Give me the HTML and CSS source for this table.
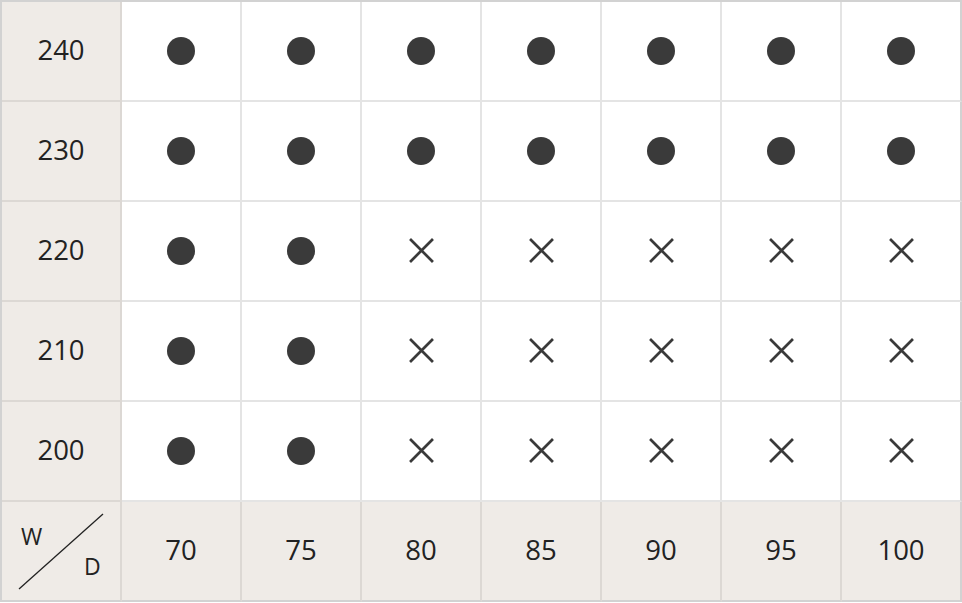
FILE: index.html
```html
<!DOCTYPE html>
<html>
<head>
<meta charset="utf-8">
<link rel="stylesheet" href="styles.css">
</head>
<body>
<div class="grid">
  <div class="cell head">240</div>
  <div class="cell"><span class="dot"></span></div>
  <div class="cell"><span class="dot"></span></div>
  <div class="cell"><span class="dot"></span></div>
  <div class="cell"><span class="dot"></span></div>
  <div class="cell"><span class="dot"></span></div>
  <div class="cell"><span class="dot"></span></div>
  <div class="cell"><span class="dot"></span></div>

  <div class="cell head">230</div>
  <div class="cell"><span class="dot"></span></div>
  <div class="cell"><span class="dot"></span></div>
  <div class="cell"><span class="dot"></span></div>
  <div class="cell"><span class="dot"></span></div>
  <div class="cell"><span class="dot"></span></div>
  <div class="cell"><span class="dot"></span></div>
  <div class="cell"><span class="dot"></span></div>

  <div class="cell head">220</div>
  <div class="cell"><span class="dot"></span></div>
  <div class="cell"><span class="dot"></span></div>
  <div class="cell"><svg class="cross" viewBox="0 0 24 24"><path d="M1 1L23 23M23 1L1 23"/></svg></div>
  <div class="cell"><svg class="cross" viewBox="0 0 24 24"><path d="M1 1L23 23M23 1L1 23"/></svg></div>
  <div class="cell"><svg class="cross" viewBox="0 0 24 24"><path d="M1 1L23 23M23 1L1 23"/></svg></div>
  <div class="cell"><svg class="cross" viewBox="0 0 24 24"><path d="M1 1L23 23M23 1L1 23"/></svg></div>
  <div class="cell"><svg class="cross" viewBox="0 0 24 24"><path d="M1 1L23 23M23 1L1 23"/></svg></div>

  <div class="cell head">210</div>
  <div class="cell"><span class="dot"></span></div>
  <div class="cell"><span class="dot"></span></div>
  <div class="cell"><svg class="cross" viewBox="0 0 24 24"><path d="M1 1L23 23M23 1L1 23"/></svg></div>
  <div class="cell"><svg class="cross" viewBox="0 0 24 24"><path d="M1 1L23 23M23 1L1 23"/></svg></div>
  <div class="cell"><svg class="cross" viewBox="0 0 24 24"><path d="M1 1L23 23M23 1L1 23"/></svg></div>
  <div class="cell"><svg class="cross" viewBox="0 0 24 24"><path d="M1 1L23 23M23 1L1 23"/></svg></div>
  <div class="cell"><svg class="cross" viewBox="0 0 24 24"><path d="M1 1L23 23M23 1L1 23"/></svg></div>

  <div class="cell head">200</div>
  <div class="cell"><span class="dot"></span></div>
  <div class="cell"><span class="dot"></span></div>
  <div class="cell"><svg class="cross" viewBox="0 0 24 24"><path d="M1 1L23 23M23 1L1 23"/></svg></div>
  <div class="cell"><svg class="cross" viewBox="0 0 24 24"><path d="M1 1L23 23M23 1L1 23"/></svg></div>
  <div class="cell"><svg class="cross" viewBox="0 0 24 24"><path d="M1 1L23 23M23 1L1 23"/></svg></div>
  <div class="cell"><svg class="cross" viewBox="0 0 24 24"><path d="M1 1L23 23M23 1L1 23"/></svg></div>
  <div class="cell"><svg class="cross" viewBox="0 0 24 24"><path d="M1 1L23 23M23 1L1 23"/></svg></div>

  <div class="cell head corner">
    <svg class="slash" viewBox="0 0 118 98"><line x1="17" y1="87" x2="101" y2="12"/></svg>
    <span class="lbl-w">W</span>
    <span class="lbl-d">D</span>
  </div>
  <div class="cell head">70</div>
  <div class="cell head">75</div>
  <div class="cell head">80</div>
  <div class="cell head">85</div>
  <div class="cell head">90</div>
  <div class="cell head">95</div>
  <div class="cell head">100</div>
</div>
</body>
</html>
```

FILE: styles.css
```css
html, body {
  margin: 0;
  padding: 0;
  background: #ffffff;
}

.grid {
  display: grid;
  grid-template-columns: repeat(8, 120px);
  grid-template-rows: repeat(6, 100px);
  width: 960px;
  border-top: 2px solid #d2d2d2;
  border-left: 2px solid #d2d2d2;
  font-family: "Open Sans", "Noto Sans", sans-serif;
  color: #222222;
}

.cell {
  box-sizing: border-box;
  border-right: 2px solid #e4e4e4;
  border-bottom: 2px solid #e4e4e4;
  background: #ffffff;
  display: flex;
  align-items: center;
  justify-content: center;
  font-size: 27.5px;
  line-height: 1;
  padding-bottom: 2px;
}

.cell:nth-child(8n) {
  border-right-color: #d2d2d2;
}

.cell:nth-last-child(-n+8) {
  border-bottom-color: #d2d2d2;
}

.head {
  background: #efebe7;
  border-right-color: #dcd8d4;
  border-bottom-color: #dcd8d4;
}

.dot {
  width: 28px;
  height: 28px;
  margin-top: 1px;
  border-radius: 50%;
  background: #3a3a3a;
}

.cross {
  width: 25px;
  height: 25px;
  margin-top: 1px;
}

.cross path {
  stroke: #3a3a3a;
  stroke-width: 2.6;
  fill: none;
}

.corner {
  position: relative;
  font-size: 23px;
}

.slash {
  position: absolute;
  left: 0;
  top: 0;
  width: 118px;
  height: 98px;
}

.slash line {
  stroke: #222222;
  stroke-width: 1.3;
}

.lbl-w {
  position: absolute;
  left: 19px;
  top: 23px;
  line-height: 23px;
}

.lbl-d {
  position: absolute;
  left: 82px;
  top: 53px;
  line-height: 23px;
}
```
